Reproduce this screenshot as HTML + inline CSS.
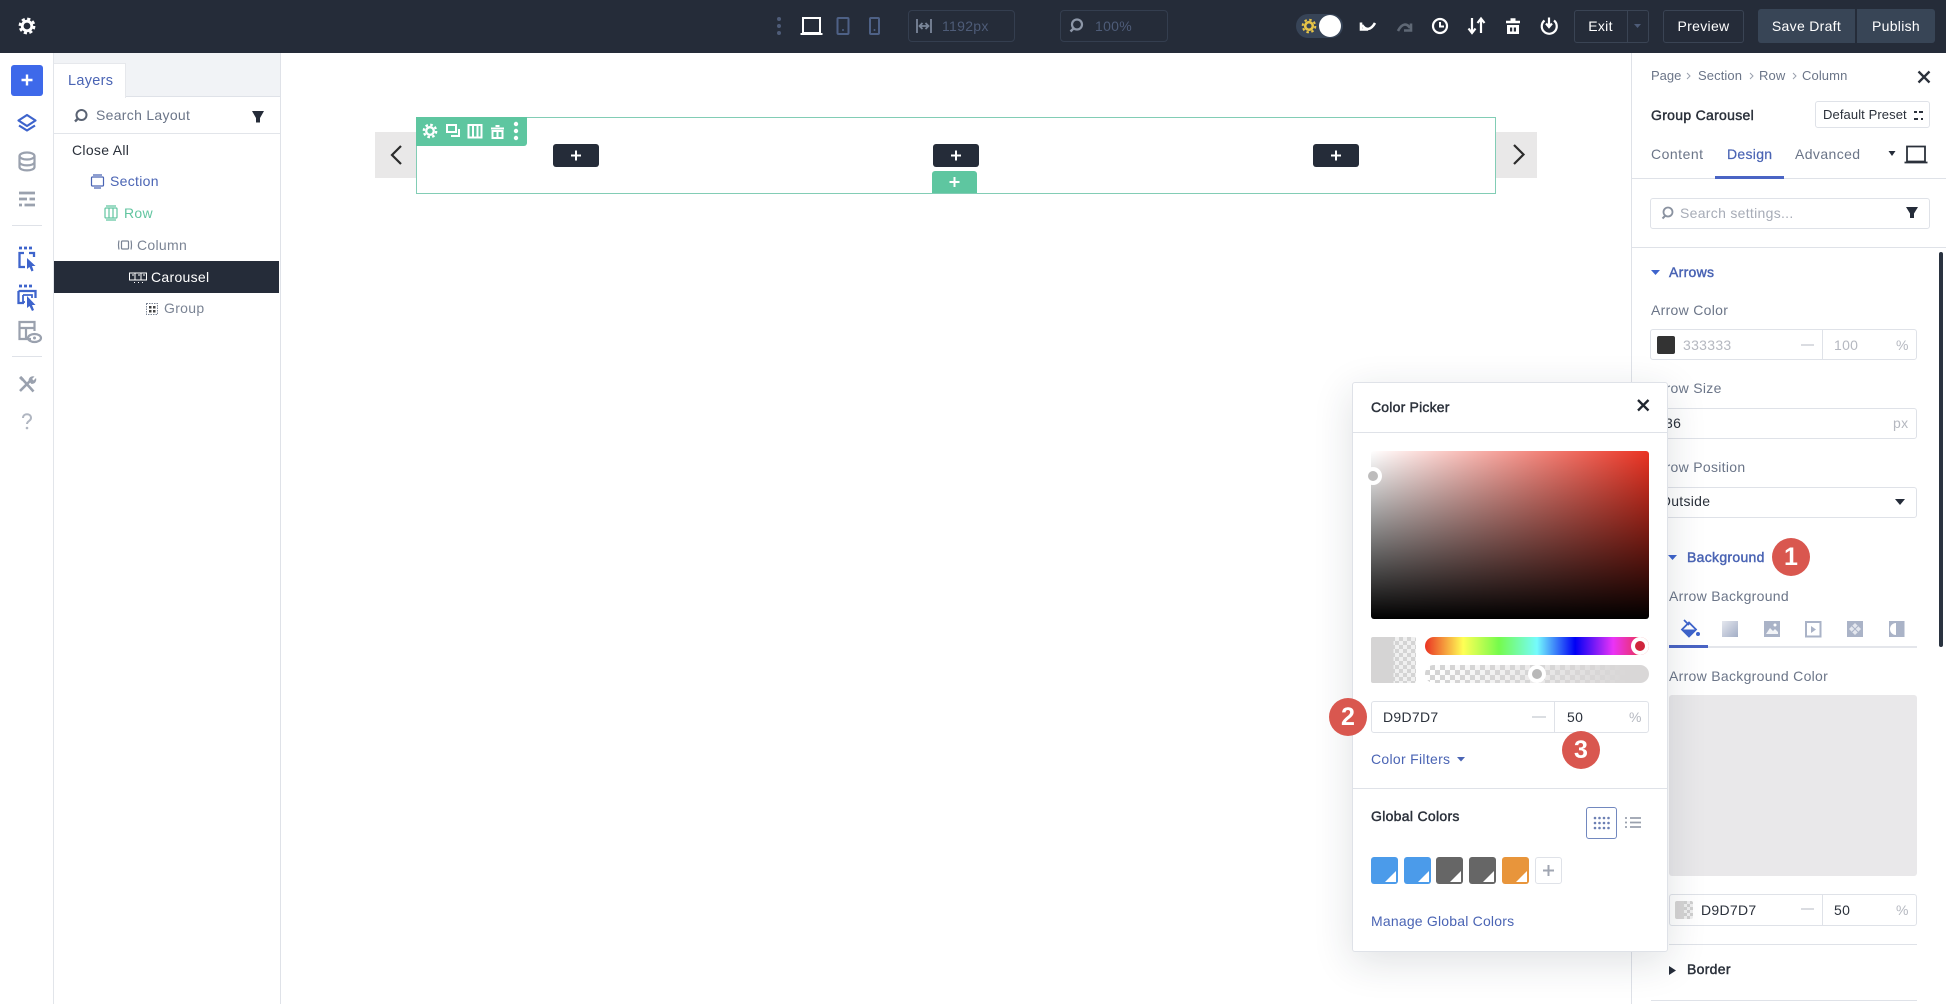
<!DOCTYPE html>
<html><head><meta charset="utf-8"><style>
html,body{margin:0;padding:0;background:#fff;width:1946px;height:1004px;overflow:hidden}
body{position:relative;font-family:"Liberation Sans",sans-serif;font-size:14px;letter-spacing:.3px;color:#2b313b;filter:blur(.3px)}
.b{position:absolute;box-sizing:border-box}
.t{position:absolute;line-height:20px;white-space:nowrap}
svg{position:absolute;overflow:visible}
.blue{color:#4a64b4}.g{color:#6b7588}.m{-webkit-text-stroke:.45px}
.inp{position:absolute;box-sizing:border-box;border:1px solid #dfe2e8;border-radius:3px;background:#fff}
.badge{position:absolute;width:38px;height:38px;border-radius:50%;background:#d9574f;color:#fff;font-weight:700;font-size:25px;line-height:38px;text-align:center;letter-spacing:0}
.sw{position:absolute;top:857px;width:27px;height:27px;border-radius:3px;overflow:hidden}
.sw:after{content:"";position:absolute;right:2px;bottom:2px;border-style:solid;border-width:0 0 11px 11px;border-color:transparent transparent #fff transparent}
</style></head><body>
<!-- top bar -->
<div class="b" style="left:0;top:0;width:1946px;height:53px;background:#252c39"></div>
<!-- sidebar & layers -->
<div class="b" style="left:53px;top:53px;width:1px;height:951px;background:#e2e5ea"></div>
<div class="b" style="left:54px;top:53px;width:226px;height:44px;background:#f1f3f6;border-bottom:1px solid #dfe2e8"></div>
<div class="b" style="left:54px;top:63px;width:72px;height:35px;background:#fff;border:1px solid #e6e8ec;border-width:1px 1px 0 0"></div>
<div class="b" style="left:280px;top:53px;width:1px;height:951px;background:#dfe2e8"></div>
<div class="b" style="left:54px;top:133px;width:226px;height:1px;background:#e2e5ea"></div>
<div class="b" style="left:54px;top:261px;width:225px;height:32px;background:#252c39"></div>
<div class="b" style="left:11px;top:65px;width:32px;height:31px;background:#3e69ea;border-radius:3px"></div>
<div class="b" style="left:12px;top:225px;width:30px;height:1px;background:#dfe2e8"></div>
<div class="b" style="left:12px;top:356px;width:30px;height:1px;background:#dfe2e8"></div>
<!-- canvas -->
<div class="b" style="left:375px;top:132px;width:41px;height:46px;background:#e9e8e8"></div>
<div class="b" style="left:1496px;top:132px;width:41px;height:46px;background:#e9e8e8"></div>
<div class="b" style="left:416px;top:117px;width:1080px;height:77px;border:1.5px solid #82cdb5"></div>
<div class="b" style="left:416px;top:117px;width:111px;height:29px;background:#5ec6a0;border-radius:0 0 3px 0"></div>
<div class="b" style="left:553px;top:144px;width:46px;height:23px;background:#252c39;border-radius:3px"></div>
<div class="b" style="left:933px;top:144px;width:46px;height:23px;background:#252c39;border-radius:3px"></div>
<div class="b" style="left:1313px;top:144px;width:46px;height:23px;background:#252c39;border-radius:3px"></div>
<div class="b" style="left:932px;top:171px;width:45px;height:22px;background:#5ec6a0;border-radius:3px 3px 0 0"></div>
<!-- right panel -->
<div class="b" style="left:1631px;top:53px;width:1px;height:951px;background:#dfe2e8"></div>
<div class="b" style="left:1632px;top:178px;width:314px;height:1px;background:#dfe2e8"></div>
<div class="b" style="left:1715px;top:176px;width:69px;height:3px;background:#4a64c4"></div>
<div class="b" style="left:1632px;top:247px;width:314px;height:1px;background:#dfe2e8"></div>
<div class="inp" style="left:1815px;top:101px;width:115px;height:27px"></div>
<div class="inp" style="left:1650px;top:198px;width:280px;height:31px"></div>
<div class="b" style="left:1939px;top:252px;width:4px;height:395px;background:#2a3340;border-radius:2px"></div>
<div class="inp" style="left:1650px;top:329px;width:267px;height:31px"></div>
<div class="b" style="left:1822px;top:330px;width:1px;height:29px;background:#dfe2e8"></div>
<div class="b" style="left:1657px;top:336px;width:18px;height:18px;background:#333;border-radius:2px"></div>
<div class="inp" style="left:1650px;top:408px;width:267px;height:31px"></div>
<div class="inp" style="left:1650px;top:487px;width:267px;height:31px"></div>
<div class="b" style="left:1669px;top:646px;width:248px;height:2px;background:#e4e6eb"></div>
<div class="b" style="left:1669px;top:645px;width:39px;height:3px;background:#4a64c4"></div>
<div class="b" style="left:1669px;top:695px;width:248px;height:181px;background:#e9e8ea;border-radius:3px"></div>
<div class="inp" style="left:1669px;top:894px;width:248px;height:32px"></div>
<div class="b" style="left:1822px;top:895px;width:1px;height:30px;background:#dfe2e8"></div>
<div class="b" style="left:1675px;top:901px;width:18px;height:18px;border-radius:2px;background:linear-gradient(to right,#d5d4d4 50%,transparent 50%),repeating-conic-gradient(#d0d0d0 0 25%,#efefef 0 50%) 0 0/6px 6px"></div>
<div class="b" style="left:1669px;top:944px;width:248px;height:1px;background:#dfe2e8"></div>
<div class="b" style="left:1651px;top:1000px;width:266px;height:1px;background:#dfe2e8"></div>

<!-- base text -->
<div class="t blue" style="left:68px;top:71px;font-size:14.5px">Layers</div>
<div class="t g" style="left:96px;top:105px">Search Layout</div>
<div class="t" style="left:72px;top:140px">Close All</div>
<div class="t blue" style="left:110px;top:171px">Section</div>
<div class="t" style="left:124px;top:203px;color:#62c5a0">Row</div>
<div class="t" style="left:137px;top:235px;color:#7b8494">Column</div>
<div class="t" style="left:151px;top:267px;color:#fff">Carousel</div>
<div class="t" style="left:164px;top:298px;color:#7b8494">Group</div>
<div class="t" style="left:942px;top:16px;color:#4e5c78">1192px</div>
<div class="t" style="left:1095px;top:16px;color:#4e5c78">100%</div>
<div class="t" style="left:1574px;top:16px;width:53px;text-align:center;color:#fff">Exit</div>
<div class="t" style="left:1663px;top:16px;width:81px;text-align:center;color:#fff">Preview</div>
<div class="b" style="left:1663px;top:10px;width:81px;height:33px;border:1px solid #3a4454;border-radius:3px"></div>
<div class="b" style="left:1574px;top:10px;width:75px;height:33px;border:1px solid #3a4454;border-radius:3px"></div>
<div class="b" style="left:1627px;top:10px;width:1px;height:33px;background:#3a4454"></div>
<div class="b" style="left:1758px;top:9px;width:97px;height:34px;background:#384556;border-radius:3px 0 0 3px"></div>
<div class="b" style="left:1857px;top:9px;width:78px;height:34px;background:#384556;border-radius:0 3px 3px 0"></div>
<div class="t" style="left:1758px;top:16px;width:97px;text-align:center;color:#fff">Save Draft</div>
<div class="t" style="left:1857px;top:16px;width:78px;text-align:center;color:#fff">Publish</div>
<div class="b" style="left:908px;top:10px;width:107px;height:32px;border:1px solid #343e4f;border-radius:4px"></div>
<div class="b" style="left:1060px;top:10px;width:108px;height:32px;border:1px solid #343e4f;border-radius:4px"></div>
<div class="b" style="left:1296px;top:14px;width:47px;height:24px;border-radius:12px;background:#374457"></div>
<div class="b" style="left:1319px;top:15px;width:22px;height:22px;border-radius:50%;background:#fff"></div>

<div class="t g" style="left:1651px;top:66px;font-size:13px;letter-spacing:0">Page</div>
<div class="t g" style="left:1698px;top:66px;font-size:13px;letter-spacing:.1px">Section</div>
<div class="t g" style="left:1759px;top:66px;font-size:13px;letter-spacing:.1px">Row</div>
<div class="t g" style="left:1802px;top:66px;font-size:13px;letter-spacing:.1px">Column</div>
<div class="t m" style="left:1651px;top:105px;font-size:14px">Group Carousel</div>
<div class="t" style="left:1823px;top:105px;font-size:13px;letter-spacing:.1px">Default Preset</div>
<div class="t g" style="left:1651px;top:144px;letter-spacing:.5px">Content</div>
<div class="t blue" style="left:1727px;top:144px;-webkit-text-stroke:.2px">Design</div>
<div class="t g" style="left:1795px;top:144px;letter-spacing:.4px">Advanced</div>
<div class="t" style="left:1680px;top:203px;color:#a7acb7">Search settings...</div>
<div class="t blue m" style="left:1669px;top:262px;font-size:14px">Arrows</div>
<div class="t g" style="left:1651px;top:300px">Arrow Color</div>
<div class="t" style="left:1683px;top:335px;color:#b5b8c0">333333</div>
<div class="t" style="left:1834px;top:335px;color:#b5b8c0">100</div>
<div class="t" style="left:1896px;top:335px;color:#b5b8c0">%</div>
<div class="t g" style="left:1651px;top:378px">Arrow Size</div>
<div class="t" style="left:1665px;top:413px">36</div>
<div class="t" style="left:1893px;top:413px;color:#b5b8c0">px</div>
<div class="t g" style="left:1651px;top:457px">Arrow Position</div>
<div class="t" style="left:1660px;top:491px">Outside</div>
<div class="t blue m" style="left:1687px;top:547px;font-size:14px">Background</div>
<div class="t g" style="left:1669px;top:586px">Arrow Background</div>
<div class="t g" style="left:1669px;top:666px">Arrow Background Color</div>
<div class="t" style="left:1701px;top:900px">D9D7D7</div>
<div class="t" style="left:1834px;top:900px">50</div>
<div class="t" style="left:1896px;top:900px;color:#b5b8c0">%</div>
<div class="t m" style="left:1687px;top:959px;font-size:14px">Border</div>

<!-- base icons -->
<svg width="1946" height="1004" style="left:0;top:0" fill="none">
<!-- top gear -->
<g transform="translate(27,26)" stroke="#fff"><circle r="4.800" stroke-width="2.800"/><circle r="7.200" stroke-width="2.400" stroke-dasharray="3.200 2.450"/></g>
<!-- dots -->
<g fill="#4e5c78"><circle cx="779" cy="19" r="2"/><circle cx="779" cy="26" r="2"/><circle cx="779" cy="33" r="2"/></g>
<path d="M803 18h17v15h-17zM800.500 34h22" stroke="#fff" stroke-width="2"/>
<g stroke="#4e6186" stroke-width="2"><rect x="837.500" y="18" width="11" height="16" rx="1"/><rect x="870" y="18" width="9" height="16" rx="1"/></g>
<circle cx="843" cy="30" r="1" fill="#4e6186"/><circle cx="874.500" cy="30" r="1" fill="#4e6186"/>
<path d="M917 19v14M931 19v14M920 26h8M922.500 23l-3 3 3 3M925.500 23l3 3-3 3" stroke="#7a8699" stroke-width="1.800"/>
<circle cx="1077" cy="24.500" r="5" stroke="#8d97a8" stroke-width="2.200"/><path d="M1073.500 28.500l-3 3" stroke="#8d97a8" stroke-width="2.400"/>
<!-- sun -->
<circle cx="1309" cy="26" r="3.800" stroke="#e8c547" stroke-width="2.600"/><circle cx="1309" cy="26" r="6.300" stroke="#e8c547" stroke-width="2" stroke-dasharray="2.500 2.450"/>
<!-- undo etc -->
<path d="M1361 22.500v7h7" stroke="#fff" stroke-width="2.600"/><path d="M1362 25c4 6 9 5 13-2" stroke="#fff" stroke-width="2.600"/>
<path d="M1411 23.500v7h-7" stroke="#5f6875" stroke-width="2.600"/><path d="M1410 28c-3-5-8-5-12 3" stroke="#5f6875" stroke-width="2.600"/>
<circle cx="1440" cy="26" r="7" stroke="#fff" stroke-width="2.200"/><path d="M1440 22v4.500h4" stroke="#fff" stroke-width="2"/>
<path d="M1472 18v14M1468.500 28.500l3.500 4.500 3.500-4.500M1481 33V19M1477.500 23l3.500-4.500 3.500 4.500" stroke="#fff" stroke-width="2.200"/>
<path d="M1506 22h14M1510.500 19.500h5" stroke="#fff" stroke-width="2.400"/><path d="M1507 25h12v9h-12z" fill="#fff"/><path d="M1510 27.500h2.200v4H1510zM1513.800 27.500h2.200v4h-2.200z" fill="#252c39"/>
<path d="M1544.500 20.500a7.500 7.500 0 1 0 9.500 0M1549 17.500v9M1546 23.500l3 3.500 3-3.500" stroke="#fff" stroke-width="2.200"/>
<path d="M1634 24h7l-3.500 4z" fill="#4e5c78"/>
<!-- side -->
<path d="M27 74.500v11M21.500 80h11" stroke="#fff" stroke-width="2.400"/>
<g stroke="#3e64cc" stroke-width="2.200" stroke-linejoin="round"><path d="M27 115l8.500 5.500-8.500 5.500-8.500-5.500z"/><path d="M19 125.500l8 5 8-5"/></g>
<g stroke="#9aa1ae" stroke-width="2.200"><ellipse cx="27" cy="156" rx="7.500" ry="3.500"/><path d="M19.500 156v11c0 4.500 15 4.500 15 0v-11M19.500 162c0 4.500 15 4.500 15 0"/></g>
<g stroke="#9aa1ae" stroke-width="2.800"><path d="M19 193h16M19 199h8M29.500 199h5.500M19 205h3M24.500 205h10.500"/></g>
<g stroke="#3e64cc" fill="none"><path d="M19 248h3M24 248h3M29 248h3" stroke-width="2.800"/><path d="M29 253h5v4M25 267h-5.500v-14H24" stroke-width="2.300"/><path d="M27 258v11l2.500-2 2 4.500 2-1-1.500-4.500h3.500z" fill="#3e64cc" stroke="none"/></g>
<g stroke="#3e64cc" fill="none"><path d="M19 286h3M24 286h3M29 286h3" stroke-width="2.800"/><path d="M18.500 291h17v7M24 303h-5.500v-12" stroke-width="2.300"/><path d="M23 295h9v3M25 302h-2v-7" stroke-width="1.800"/><path d="M27 296v12l2.500-2 2.500 5 2-1-2-5h3.500z" fill="#3e64cc" stroke="none"/></g>
<g stroke="#9aa1ae" stroke-width="2.200"><path d="M31 339h-11.500v-17h15v9M19.500 328h15M26 328v11"/><ellipse cx="34.500" cy="338" rx="6.500" ry="4"/></g><circle cx="34.500" cy="338" r="1.500" fill="#9aa1ae"/>
<path d="M20.500 377l13 14.500M32 379l-12 12" stroke="#9aa1ae" stroke-width="2.600"/><path d="M28.500 381c0-3.500 3-5.500 6-4.500l-2.500 2.500 1.500 1.500 2.500-2.500c1 3-1 6-4.500 6z" fill="#9aa1ae"/><path d="M19 378l2-2 3 3-2 2z" fill="#9aa1ae"/>
<path d="M23 418c0-5 8-5 8 0 0 3-4 3-4 6" stroke="#b0b6c1" stroke-width="2"/><circle cx="27" cy="428" r="1.300" fill="#b0b6c1"/>
<!-- layers list -->
<circle cx="81.500" cy="115" r="5" stroke="#5a6373" stroke-width="2"/><path d="M77.500 119l-2.500 2.500" stroke="#5a6373" stroke-width="2.400"/>
<path d="M252 111h12l-4 7v4.500h-4V118z" fill="#252c39"/>
<g stroke="#4a64b4" stroke-width="1.200"><rect x="91.500" y="177" width="12" height="9" rx="1"/><path d="M93 175h9M94 188h7"/></g>
<g stroke="#62c5a0" stroke-width="1.200"><rect x="105" y="208" width="12" height="10" rx="1"/><path d="M109 208v10M113 208v10M106 206h10M106 220h10"/></g>
<g stroke="#7b8494" stroke-width="1.200"><rect x="121.500" y="241" width="7" height="8" rx="1"/><path d="M119 240.500q-1 4.500 0 9M131 240.500q1 4.500 0 9"/></g>
<g stroke="#fff" stroke-width="1"><rect x="129.500" y="273" width="17" height="7"/><path d="M135 273v7M141 273v7"/><path d="M134 282.500h1M138 282.500h1M142 282.500h1M132 275h2M138 275h2M143 275h2" stroke-width="1"/></g>
<g stroke="#7b8494" stroke-width="1" stroke-dasharray="1.500 1"><rect x="146.500" y="303.500" width="11" height="11"/></g><g fill="#444"><rect x="149" y="306" width="2.500" height="2.500"/><rect x="153" y="306" width="2.500" height="2.500"/><rect x="149" y="310" width="2.500" height="2.500"/><rect x="153" y="310" width="2.500" height="2.500"/></g>
<!-- canvas -->
<path d="M401 146l-9 9 9 9" stroke="#2b2b2b" stroke-width="2.200"/>
<path d="M1514 145l9.500 9.500-9.500 9.500" stroke="#2b2b2b" stroke-width="2.200"/>
<g stroke="#fff" stroke-width="2"><path d="M576 150.500v10M571 155.500h10M956 150.500v10M951 155.500h10M1336 150.500v10M1331 155.500h10M954.500 177v10M949.500 182h10"/></g>
<g transform="translate(430,131)" stroke="#fff"><circle r="3.800" stroke-width="2.300"/><circle r="6.200" stroke-width="2.300" stroke-dasharray="2.600 2.270"/></g>
<g stroke="#fff" stroke-width="2"><rect x="447" y="125" width="9" height="7"/><path d="M459 129v7h-8"/><rect x="468.500" y="125" width="13" height="12.500"/><path d="M473 125v12M477.500 125v12"/><path d="M491 128.500h13M495.500 126h4"/><rect x="492.500" y="131" width="10" height="7"/><path d="M497.500 131v7"/></g>
<g fill="#fff"><circle cx="516" cy="124" r="2.200"/><circle cx="516" cy="131" r="2.200"/><circle cx="516" cy="138" r="2.200"/></g>
<!-- panel -->
<g stroke="#9aa1ae" stroke-width="1"><path d="M1687 73l3 3-3 3M1750 73l3 3-3 3M1793 73l3 3-3 3"/></g>
<path d="M1918.500 71.500l11 11M1929.500 71.500l-11 11" stroke="#2b313b" stroke-width="2.300"/>
<g stroke="#2b313b" stroke-width="2"><path d="M1914 112h3M1919 112h4M1914 119h4M1921 119h2"/></g>
<path d="M1888.500 151h7l-3.500 5z" fill="#252c39"/>
<path d="M1907 146.500h18v15h-18zM1904.500 162.500h23" stroke="#2b313b" stroke-width="1.800"/>
<circle cx="1668" cy="212" r="4.500" stroke="#8a92a0" stroke-width="1.800"/><path d="M1665 216l-2.500 2.500" stroke="#8a92a0" stroke-width="2"/>
<path d="M1906 207h12l-4 6.500v4.500h-4v-4.500z" fill="#252c39"/>
<path d="M1651 270h9l-4.500 5z" fill="#3e64cc"/>
<path d="M1895 499h10l-5 6z" fill="#252c39"/>
<path d="M1668 555h9l-4.500 5z" fill="#3e64cc"/>
<path d="M1689 622.500l7 7-7 7-7-7z" stroke="#3e64cc" stroke-width="1.800"/><path d="M1681 629.500h16l-8 8z" fill="#3e64cc"/><path d="M1684 620l5 5" stroke="#3e64cc" stroke-width="1.800"/><circle cx="1698" cy="634" r="2" fill="#3e64cc"/>
<defs><linearGradient id="gr" x1="0" y1="0" x2="1" y2="1"><stop offset="0" stop-color="#e4e7ee"/><stop offset="1" stop-color="#a3aec6"/></linearGradient></defs>
<rect x="1722" y="621" width="16" height="16" fill="url(#gr)"/>
<g fill="#aab3c7"><rect x="1764" y="621" width="16" height="16"/></g><path d="M1766 634l4-6 3 3 2-2 3 3v2z" fill="#fff" opacity=".85"/><circle cx="1775" cy="625" r="1.500" fill="#fff"/>
<rect x="1806" y="622" width="14.500" height="14.500" stroke="#aab3c7" stroke-width="2"/><path d="M1811 626v7l5-3.500z" fill="#aab3c7"/>
<rect x="1847" y="621" width="16" height="16" fill="#aab3c7"/><path d="M1855 623l6 6-6 6-6-6z" fill="#e4e7ee"/><path d="M1852 626l6 6M1858 626l-6 6" stroke="#aab3c7"/>
<rect x="1889" y="621" width="15.500" height="16" fill="#aab3c7"/><path d="M1895 623a6 6 0 0 1 0 12z" fill="#fff" transform="matrix(-1 0 0 1 3791 0)"/>
<path d="M1801 345h13M1801 909h13" stroke="#c3c7cf" stroke-width="1.200"/>
<path d="M1669 966l7 4.500-7 4.500z" fill="#252c39"/>
</svg>

<!-- color picker popup -->
<div class="b" style="left:1352px;top:382px;width:316px;height:570px;background:#fff;border:1px solid #dfe2e8;border-radius:3px;box-shadow:0 10px 40px rgba(30,40,60,.14)"></div>
<div class="b" style="left:1353px;top:432px;width:314px;height:1px;background:#dfe2e8"></div>
<div class="b" style="left:1353px;top:788px;width:314px;height:1px;background:#dfe2e8"></div>
<div class="t m" style="left:1371px;top:397px;font-size:14px;letter-spacing:.2px">Color Picker</div>
<div class="b" style="left:1371px;top:451px;width:278px;height:168px;border-radius:3px;background:linear-gradient(to top,#000,rgba(0,0,0,0)),linear-gradient(to right,#fff,#ea3323)"></div>
<div class="b" style="left:1371px;top:637px;width:45px;height:46px;border-radius:2px;background:linear-gradient(to right,#d5d4d4 50%,transparent 50%),repeating-conic-gradient(#d4d4d4 0 25%,#f0f0f0 0 50%) 0 0/8px 8px"></div>
<div class="b" style="left:1425px;top:637px;width:224px;height:18px;border-radius:9px;background:linear-gradient(to right,#ea3323 0%,#ffff55 17%,#75fb4c 33%,#75fbfd 50%,#0000f5 67%,#ea33f7 84%,#ea3323 100%)"></div>
<div class="b" style="left:1425px;top:665px;width:224px;height:18px;border-radius:9px;background:linear-gradient(to right,rgba(217,215,215,0),#d9d7d7 90%),repeating-conic-gradient(#d4d4d4 0 25%,#fff 0 50%) 0 0/10px 10px"></div>
<div class="inp" style="left:1371px;top:701px;width:278px;height:32px"></div>
<div class="b" style="left:1554px;top:702px;width:1px;height:30px;background:#dfe2e8"></div>
<div class="t" style="left:1383px;top:707px">D9D7D7</div>
<div class="t" style="left:1567px;top:707px">50</div>
<div class="t" style="left:1629px;top:707px;color:#b5b8c0">%</div>
<div class="t blue" style="left:1371px;top:749px">Color Filters</div>
<div class="t m" style="left:1371px;top:806px;font-size:14px">Global Colors</div>
<div class="b" style="left:1586px;top:807px;width:31px;height:32px;border:1.500px solid #7288bf;border-radius:3px"></div>
<div class="sw" style="left:1371px;background:#4b9bea"></div>
<div class="sw" style="left:1404px;background:#4b9bea"></div>
<div class="sw" style="left:1436px;background:#666"></div>
<div class="sw" style="left:1469px;background:#666"></div>
<div class="sw" style="left:1502px;background:#e8953b"></div>
<div class="b" style="left:1535px;top:857px;width:27px;height:27px;border:1px solid #dfe2e8;border-radius:3px"></div>
<div class="t blue" style="left:1371px;top:911px;letter-spacing:.2px">Manage Global Colors</div>
<div class="badge" style="left:1772px;top:538px">1</div>
<div class="badge" style="left:1329px;top:698px">2</div>
<div class="badge" style="left:1562px;top:731px">3</div>
<svg width="1946" height="1004" style="left:0;top:0" fill="none">
<path d="M1638 400l10.500 10.500M1648.500 400l-10.500 10.500" stroke="#20262f" stroke-width="2.300"/>
<circle cx="1373" cy="476" r="9" fill="#fff"/><circle cx="1373" cy="476" r="5" fill="#bdbcbc"/>
<circle cx="1640" cy="646" r="9" fill="#fff"/><circle cx="1640" cy="646" r="5" fill="#d0253c"/>
<circle cx="1537" cy="674" r="9" fill="#fff"/><circle cx="1537" cy="674" r="5" fill="#b8b8b8"/>
<path d="M1532 717h14" stroke="#c3c7cf" stroke-width="1.200"/>
<path d="M1457 757h8l-4 4.500z" fill="#4a64b4"/>
<g fill="#6b7fb3"><circle cx="1595" cy="818" r="1.300"/><circle cx="1599.500" cy="818" r="1.300"/><circle cx="1604" cy="818" r="1.300"/><circle cx="1608.500" cy="818" r="1.300"/><circle cx="1595" cy="823" r="1.300"/><circle cx="1599.500" cy="823" r="1.300"/><circle cx="1604" cy="823" r="1.300"/><circle cx="1608.500" cy="823" r="1.300"/><circle cx="1595" cy="828" r="1.300"/><circle cx="1599.500" cy="828" r="1.300"/><circle cx="1604" cy="828" r="1.300"/><circle cx="1608.500" cy="828" r="1.300"/></g>
<g stroke="#9aa1ae" stroke-width="1.800"><path d="M1630 818h11M1630 822.500h11M1630 827h11M1625 818h2M1625 822.500h2M1625 827h2"/></g>
<path d="M1548.500 865v11M1543 870.500h11" stroke="#a0a6b2" stroke-width="2"/>
</svg>
</body></html>
